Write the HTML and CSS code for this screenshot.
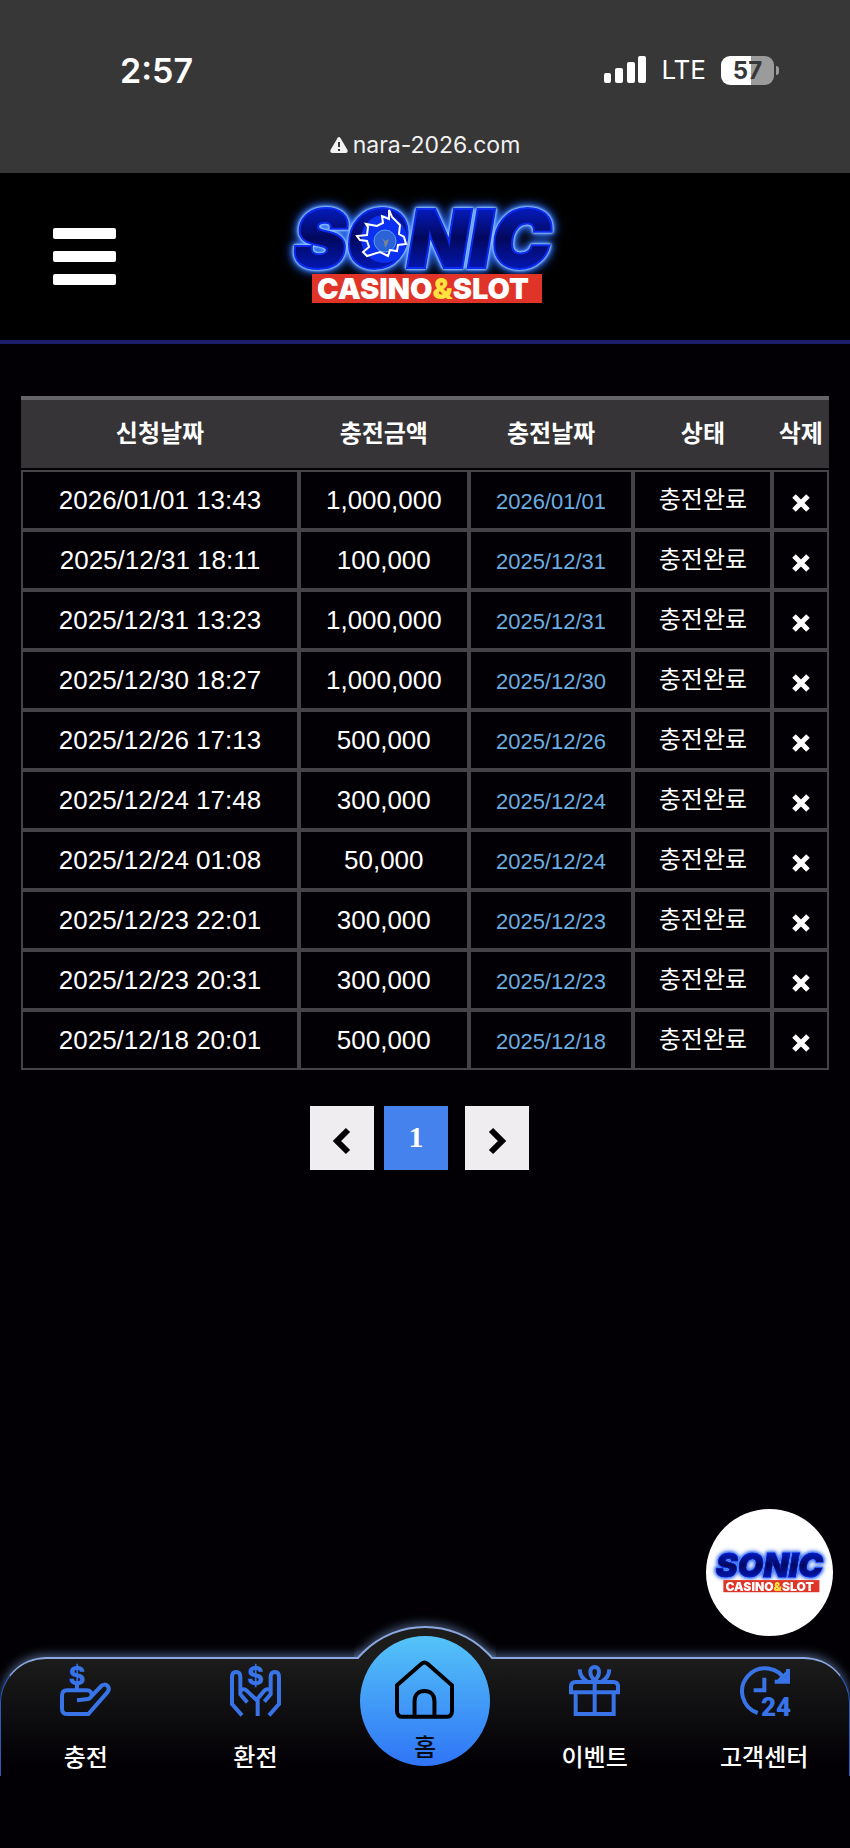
FILE: index.html
```html
<!DOCTYPE html>
<html lang="ko">
<head>
    <meta charset="UTF-8">
    <meta name="viewport" content="width=device-width, initial-scale=1.0">
    <title>SONIC CASINO&amp;SLOT</title>
    <link rel="stylesheet" href="styles.css">
</head>
<body>
    <div class="browser-bar">
        <div class="status">
            <span class="time">2:57</span>
            <div class="status-right">
                <svg class="signal" viewBox="0 0 42 28" aria-hidden="true">
                    <rect x="0" y="17" width="7" height="10" rx="2"/>
                    <rect x="11" y="12" width="8" height="15" rx="2"/>
                    <rect x="23" y="6" width="8" height="21" rx="2"/>
                    <rect x="34" y="0" width="8" height="27" rx="2"/>
                </svg>
                <span class="network">LTE</span>
                <div class="battery"><span>57</span></div>
            </div>
        </div>
        <div class="address">
            <svg class="warn" viewBox="0 0 18 16" aria-hidden="true">
                <path d="M7.400 1.200Q9-1 10.600 1.200L17.500 13Q18.300 16 15.500 16H2.500Q-.3 16 .5 13Z" fill="#f2f2f2"/>
                <path d="M9 5v5M9 12v2" stroke="#373737" stroke-width="2"/>
            </svg>
            <span>nara-2026.com</span>
        </div>
    </div>

    <header class="header">
        <button class="menu-btn" type="button" aria-label="메뉴">
            <span></span><span></span><span></span>
        </button>
        <a class="logo" href="#" aria-label="홈">
            <svg viewBox="0 0 310 130">
                <defs>
                    <linearGradient id="blue" x1="0" y1="0" x2="0" y2="1">
                        <stop offset="0" stop-color="#0626f5"/>
                        <stop offset=".5" stop-color="#02085e"/>
                        <stop offset="1" stop-color="#0420e0"/>
                    </linearGradient>
                </defs>
                <g class="logo-glow">
                    <text class="logo-name" x="24" y="75" fill="url(#blue)">SONIC</text>
                </g>
                <ellipse cx="114" cy="47" rx="23" ry="24" fill="#0c30f0"/>
                <circle cx="115" cy="49" r="11" fill="#2b62d8" stroke="#5b9cf5"/>
                <path d="M112 46l3 3 4-2-2 6-2 3-1-6z" fill="#7c8494"/>
                <path class="spark" d="M119 18L122 25 130 33 129 42 134 45 136 52 128 53 127 59 120 58 118 64 110 60 97 64 93 60 99 55 97 49 90 48 87 44 97 43 98 35 96 32 107 34 113 31 112 24 119 27Z"/>
                <rect x="42" y="82" width="230" height="29" fill="#df3427"/>
                <text class="logo-sub" x="47" y="107">CASINO<tspan class="amp">&amp;</tspan>SLOT</text>
            </svg>
        </a>
    </header>

    <main class="main">
        <table class="history">
            <colgroup>
                <col class="col-request">
                <col class="col-amount">
                <col class="col-date">
                <col class="col-state">
                <col class="col-delete">
            </colgroup>
            <thead>
                <tr><th>신청날짜</th><th>충전금액</th><th>충전날짜</th><th>상태</th><th>삭제</th></tr>
            </thead>
            <tbody id="historyBody"></tbody>
        </table>

        <nav class="pagination" aria-label="페이지">
            <button type="button" aria-label="이전">
                <svg viewBox="0 0 18 26"><path d="M15 2L4 13l11 11"/></svg>
            </button>
            <button class="current" type="button">1</button>
            <button type="button" aria-label="다음">
                <svg viewBox="0 0 18 26"><path d="M3 2l11 11L3 24"/></svg>
            </button>
        </nav>
    </main>

    <a class="float-badge" href="#" aria-label="고객센터">
        <svg viewBox="10 15 285 100">
            <g class="logo-glow">
                <text class="logo-name" x="24" y="75" fill="url(#blue)">SONIC</text>
            </g>
            <rect x="42" y="82" width="230" height="29" fill="#df3427"/>
            <text class="logo-sub" x="47" y="107">CASINO<tspan class="amp">&amp;</tspan>SLOT</text>
        </svg>
    </a>

    <nav class="tabbar">
        <a class="tab" href="#">
            <svg viewBox="0 0 153 153">
                <text class="dollar" x="51" y="59">$</text>
                <path d="M51 60V75M51 106l27-3c10-1 17-6 17-14s-6-13-14-13H22Q6 76 6 92V131Q6 147 22 147H85L142 82c6-7 5-14 1-19-6-6-14-5-19 0L92 96"/>
            </svg>
            <span>충전</span>
        </a>
        <a class="tab" href="#">
            <svg viewBox="0 0 153 153">
                <text class="dollar" x="77" y="59">$</text>
                <path d="M36 151L6 117V36c0-10 4-15 12-15s13 5 13 15V88L52 112M31 78c5-8 14-6 19-1L83 108V153M117 151l30-34V36c0-10-4-15-12-15s-13 5-13 15V88l-19 22M122 78c-5-8-14-6-19-1L79 106"/>
            </svg>
            <span>환전</span>
        </a>
        <a class="tab-home" href="#">
            <svg viewBox="0 0 178 177">
                <path d="M6 76L80 11Q89 3 98 11L172 76V153Q172 171 154 171H24Q6 171 6 153ZM59 171V123c0-19 12-30 30-30s30 11 30 30V171"/>
            </svg>
            <span>홈</span>
        </a>
        <a class="tab" href="#">
            <svg viewBox="0 0 153 153">
                <path d="M6 82V65Q6 51 20 51H133Q147 51 147 65V82ZM20 82V147H134V82M77 46V147M77 46c-9-8-13-17-13-26 0-8 5-14 13-14s13 6 13 14c0 9-4 18-13 26M32 13c1 18 9 29 22 35M121 13c-1 18-9 29-22 35"/>
            </svg>
            <span>이벤트</span>
        </a>
        <a class="tab" href="#">
            <svg viewBox="0 0 153 153">
                <path d="M56 144A69 69 0 1 1 141 50M147 12V50H107M76 38V76H44M118 49L146 22"/>
                <text class="hours" x="66" y="152">24</text>
            </svg>
            <span>고객센터</span>
        </a>
    </nav>

    <script>
        const rows = [
            ['2026/01/01 13:43', '1,000,000'],
            ['2025/12/31 18:11', '100,000'],
            ['2025/12/31 13:23', '1,000,000'],
            ['2025/12/30 18:27', '1,000,000'],
            ['2025/12/26 17:13', '500,000'],
            ['2025/12/24 17:48', '300,000'],
            ['2025/12/24 01:08', '50,000'],
            ['2025/12/23 22:01', '300,000'],
            ['2025/12/23 20:31', '300,000'],
            ['2025/12/18 20:01', '500,000']
        ];
        const historyBody = document.getElementById('historyBody');

        rows.forEach(([requested, amount]) => {
            const tr = document.createElement('tr');
            tr.innerHTML = `
                <td>${requested}</td>
                <td>${amount}</td>
                <td class="date">${requested.split(' ')[0]}</td>
                <td class="state">충전완료</td>
                <td><button class="delete-btn" type="button" aria-label="삭제">
                    <svg viewBox="0 0 18 18"><path d="M2 2l14 14M16 2L2 16"/></svg>
                </button></td>`;
            historyBody.appendChild(tr);
        });
    </script>
</body>
</html>
```
FILE: styles.css
```css
*,
*::before,
*::after {
    box-sizing: border-box;
}
body {
    margin: 0;
    min-height: 100vh;
    display: flex;
    flex-direction: column;
    background: #020004;
    color: #fff;
    font-family: "Liberation Sans", "Noto Sans CJK KR", sans-serif;
    padding-bottom: 72px;
}
a {
    color: inherit;
    text-decoration: none;
}
button {
    border: none;
    padding: 0;
    cursor: pointer;
}
svg {
    overflow: visible;
}

/* Browser bar */
.browser-bar {
    background: #373737;
    padding: 50px 0 13px;
    display: flex;
    flex-direction: column;
    gap: 40px;
    font-family: Inter, sans-serif;
}
.status {
    display: flex;
    justify-content: space-between;
    align-items: center;
    height: 40px;
    padding: 0 76px 0 120px;
}
.time {
    font-size: 34px;
    font-weight: 600;
}
.status-right {
    display: flex;
    align-items: center;
    gap: 15px;
}
.signal {
    width: 42px;
    height: 28px;
    fill: #fff;
}
.network {
    font-size: 26px;
    line-height: 40px;
}
.battery {
    position: relative;
    width: 53px;
    height: 29px;
    border-radius: 9px;
    background: linear-gradient(to right, #fff 57%, #9b9b9b 57%);
    color: #373737;
    font-size: 24px;
    font-weight: 700;
    line-height: 29px;
    text-align: center;
}
.battery::after {
    content: "";
    position: absolute;
    right: -5px;
    top: 10px;
    width: 3px;
    height: 9px;
    border-radius: 0 4px 4px 0;
    background: #9b9b9b;
}
.address {
    display: flex;
    justify-content: center;
    align-items: center;
    gap: 5px;
    font-size: 23px;
    line-height: 30px;
    color: #f2f2f2;
}
.warn {
    width: 18px;
    height: 16px;
}

/* Header */
.header {
    display: grid;
    grid-template-columns: 1fr auto 1fr;
    align-items: center;
    height: 171px;
    padding: 0 53px;
    background: #000;
    border-bottom: 4px solid #1b1d6b;
}
.menu-btn {
    width: 63px;
    display: flex;
    flex-direction: column;
    gap: 12px;
    background: none;
}
.menu-btn span {
    height: 11px;
    border-radius: 2px;
    background: #fff;
}
.logo svg {
    display: block;
    width: 310px;
    height: 130px;
}
.logo-glow {
    filter: drop-shadow(0 0 1px #a4d4ff) drop-shadow(0 0 1px #a4d4ff) drop-shadow(0 0 3px #3f84ff) drop-shadow(0 0 5px #1d55e0);
}
.logo-name {
    font: italic 900 79px Inter, sans-serif;
    stroke: #0b2cf0;
    stroke-width: 4;
    paint-order: stroke;
}
.logo-sub {
    font: 900 29px Inter, sans-serif;
    fill: #fff;
}
.logo-sub .amp {
    fill: #ffe23d;
}
.spark {
    fill: none;
    stroke: #fff;
    stroke-width: 2;
}

/* Charge history */
.main {
    padding: 52px 21px 0;
}
.history {
    width: 100%;
    table-layout: fixed;
    border-collapse: separate;
    border-spacing: 0;
    border-top: 4px solid #656466;
    text-align: center;
}
.col-request {
    width: 34.4%;
}
.col-amount {
    width: 21%;
}
.col-date {
    width: 20.4%;
}
.col-state {
    width: 17.2%;
}
.col-delete {
    width: 7%;
}
.history th {
    height: 70px;
    padding: 0 0 6px;
    background: #363436;
    border-bottom: 2px solid #020004;
    font-size: 24px;
    font-weight: 700;
    white-space: nowrap;
}
.history td {
    height: 60px;
    padding: 0;
    border: 2px solid #454345;
    font-size: 26px;
    line-height: 30px;
}
.history .date {
    padding-top: 4px;
    font-size: 22px;
    color: #6caee2;
}
.history .state {
    font-size: 24px;
}
.delete-btn {
    width: 40px;
    height: 40px;
    padding-top: 6px;
    background: none;
    vertical-align: middle;
}
.delete-btn svg {
    display: block;
    width: 18px;
    height: 18px;
    margin: 0 auto;
    stroke: #fff;
    stroke-width: 5;
}

/* Pagination */
.pagination {
    display: flex;
    justify-content: center;
    gap: 10px;
    margin-top: 36px;
    padding-right: 11px;
}
.pagination button {
    display: flex;
    align-items: center;
    justify-content: center;
    width: 64px;
    height: 64px;
    padding-top: 6px;
    background: #efedf0;
}
.pagination svg {
    width: 18px;
    height: 26px;
    fill: none;
    stroke: #000;
    stroke-width: 6;
}
.pagination .current {
    margin-right: 7px;
    padding: 0 0 2px;
    background: #4682ee;
    color: #fff;
    font: bold 30px "Liberation Serif", serif;
}

/* Floating badge */
.float-badge {
    position: fixed;
    right: 17px;
    bottom: 212px;
    display: flex;
    align-items: center;
    justify-content: center;
    width: 127px;
    height: 127px;
    border-radius: 50%;
    background: #fff;
}
.float-badge svg {
    width: 119px;
    height: 42px;
}

/* Bottom tab bar */
.tabbar {
    position: relative;
    margin-top: auto;
    display: grid;
    grid-template-columns: repeat(5, 1fr);
    align-items: start;
    height: 119px;
    border: 1px solid #2b5cb8;
    border-top: 2px solid #8ba8e0;
    border-bottom: none;
    border-radius: 46px 46px 0 0;
    background: linear-gradient(#1c1c1c, #020004 90%);
    box-shadow: 0 -3px 10px rgba(130, 160, 220, 0.5);
    clip-path: inset(-50px 0 0 0);
}
/* raised arc behind the home button */
.tabbar::before {
    content: "";
    position: absolute;
    left: 50%;
    top: -33px;
    width: 178px;
    height: 178px;
    margin-left: -89px;
    border: 2px solid #8ba8e0;
    border-radius: 50%;
    background: #1c1c1c;
    box-shadow: 0 -3px 10px rgba(130, 160, 220, 0.5);
    clip-path: inset(-16px 18px 145px 18px);
}
.tab,
.tab-home {
    display: flex;
    flex-direction: column;
    align-items: center;
    font-size: 24px;
    font-weight: 500;
    line-height: 30px;
    font-family: "Noto Sans CJK KR", sans-serif;
}
.tab {
    gap: 25px;
    padding-top: 6px;
}
.tab svg {
    width: 51px;
    height: 51px;
    fill: none;
    stroke: #3874e8;
    stroke-width: 12;
}
.tab text {
    fill: #3874e8;
    stroke: none;
}
.dollar {
    font: 800 76px Inter, sans-serif;
    text-anchor: middle;
}
.hours {
    font: 900 78px Roboto, sans-serif;
}
.tab-home {
    position: relative;
    justify-self: center;
    width: 130px;
    height: 130px;
    margin-top: -23px;
    padding-top: 24px;
    gap: 12px;
    border-radius: 50%;
    background: linear-gradient(#55c3f8, #2f74f6);
    color: #050a14;
}
.tab-home svg {
    width: 59px;
    height: 59px;
    fill: none;
    stroke: #000;
    stroke-width: 12;
}
```
